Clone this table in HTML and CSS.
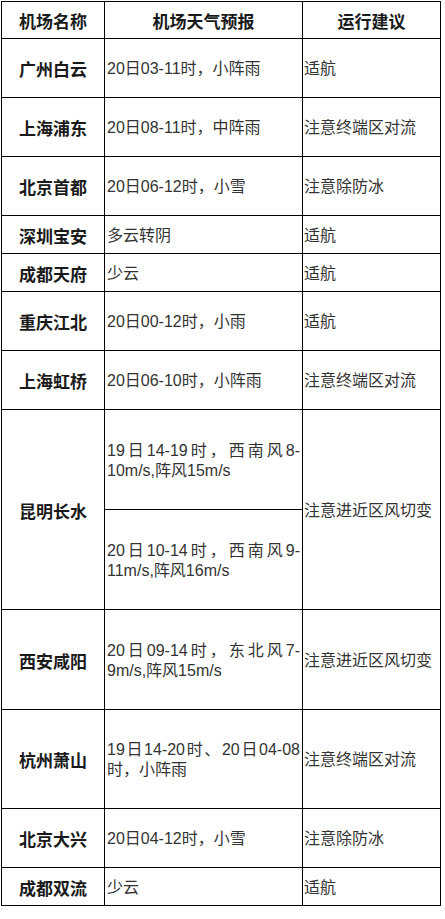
FILE: index.html
```html
<!DOCTYPE html>
<html lang="zh-CN">
<head>
<meta charset="utf-8">
<title>机场天气预报</title>
<link rel="stylesheet" href="styles.css">
</head>
<body>
<div class="wx">
  <div class="c h">机场名称</div>
  <div class="c h">机场天气预报</div>
  <div class="c h">运行建议</div>

  <div class="c n">广州白云</div>
  <div class="c f">20日03-11时，小阵雨</div>
  <div class="c a">适航</div>

  <div class="c n">上海浦东</div>
  <div class="c f">20日08-11时，中阵雨</div>
  <div class="c a">注意终端区对流</div>

  <div class="c n">北京首都</div>
  <div class="c f">20日06-12时，小雪</div>
  <div class="c a">注意除防冰</div>

  <div class="c n">深圳宝安</div>
  <div class="c f">多云转阴</div>
  <div class="c a">适航</div>

  <div class="c n">成都天府</div>
  <div class="c f">少云</div>
  <div class="c a">适航</div>

  <div class="c n">重庆江北</div>
  <div class="c f">20日00-12时，小雨</div>
  <div class="c a">适航</div>

  <div class="c n">上海虹桥</div>
  <div class="c f">20日06-10时，小阵雨</div>
  <div class="c a">注意终端区对流</div>

  <div class="c n span2">昆明长水</div>
  <div class="c f"><span class="jl">19日14-19时，西南风8-</span><span class="ln">10m/s,阵风15m/s</span></div>
  <div class="c a span2">注意进近区风切变</div>
  <div class="c f"><span class="jl">20日10-14时，西南风9-</span><span class="ln">11m/s,阵风16m/s</span></div>

  <div class="c n">西安咸阳</div>
  <div class="c f"><span class="jl">20日09-14时，东北风7-</span><span class="ln">9m/s,阵风15m/s</span></div>
  <div class="c a">注意进近区风切变</div>

  <div class="c n">杭州萧山</div>
  <div class="c f"><span class="jl">19日14-20时、20日04-08</span><span class="ln">时，小阵雨</span></div>
  <div class="c a">注意终端区对流</div>

  <div class="c n">北京大兴</div>
  <div class="c f">20日04-12时，小雪</div>
  <div class="c a">注意除防冰</div>

  <div class="c n">成都双流</div>
  <div class="c f">少云</div>
  <div class="c a">适航</div>
</div>
</body>
</html>
```

FILE: styles.css
```css
html, body {
  margin: 0;
  padding: 0;
  background: #fff;
}

body {
  font-family: "Liberation Sans", "Noto Sans CJK SC", sans-serif;
  font-size: 16px;
  color: #333;
}

.wx {
  box-sizing: border-box;
  width: 440px;
  margin: 1px 0 0 1px;
  padding: 1px;
  background: #000;
  display: grid;
  grid-template-columns: 102px 197px 137px;
  grid-template-rows: 36px 58px 58px 58px 37px 37px 58px 58px 99px 99px 99px 98px 58px 37px;
  gap: 1px;
}

.c {
  background: #fff;
  display: flex;
  flex-direction: column;
  justify-content: center;
  line-height: 20px;
  padding: 2px 2px 0 2px;
  box-sizing: border-box;
  min-width: 0;
}

.h {
  align-items: center;
  font-family: "Noto Sans CJK SC", sans-serif;
  font-weight: bold;
  font-size: 17px;
  color: #1a1a1a;
}

.n {
  align-items: center;
  font-family: "Noto Sans CJK SC", sans-serif;
  font-weight: bold;
  font-size: 17px;
  color: #1a1a1a;
}

.f {
  padding-left: 2px;
}

.a {
  padding-left: 1px;
}

.span2 {
  grid-row: span 2;
}

.jl {
  display: block;
  text-align: justify;
  text-align-last: justify;
  white-space: nowrap;
}

.ln {
  display: block;
}
```
